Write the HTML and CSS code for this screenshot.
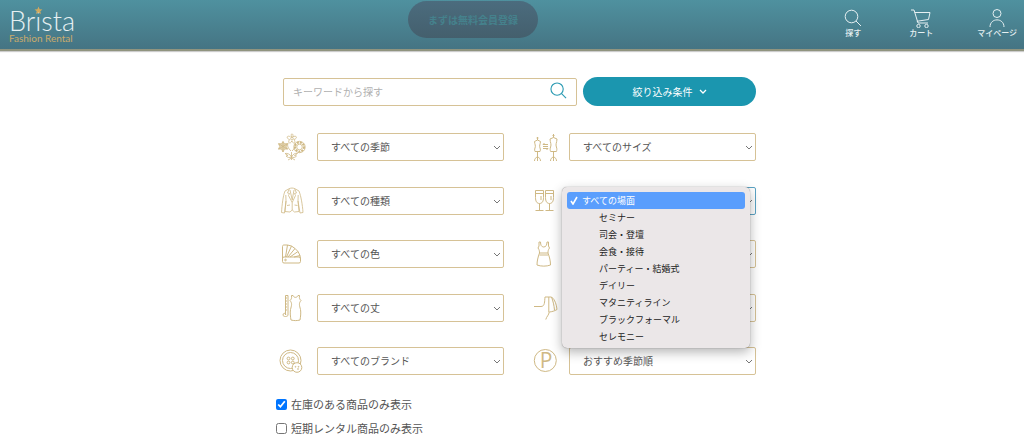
FILE: index.html
```
<!DOCTYPE html>
<html lang="ja">
<head>
<meta charset="utf-8">
<meta name="viewport" content="width=device-width, initial-scale=1">
<title>Brista Fashion Rental</title>
<link rel="stylesheet" href="styles.css">
</head>
<body>
<svg class="sprite" aria-hidden="true">
  <symbol id="chevron" viewBox="0 0 8 6"><path d="M1 1l3 3 3-3"/></symbol>
  <symbol id="search" viewBox="0 0 18 18"><circle cx="7.5" cy="7.5" r="6.5"/><path d="M12 12l5 5"/></symbol>
</svg>

<header class="header">
  <a class="logo" href="#">
    <span class="logo-name">Brista</span>
    <svg class="logo-star" viewBox="0 0 8 8" aria-hidden="true"><path d="M4 .5l1 2.3 2.500.2-1.900 1.600.6 2.600L4 5.800 1.800 7.200l.6-2.600L.5 3l2.500-.2z"/></svg>
    <span class="logo-sub">Fashion Rental</span>
  </a>
  <a class="cta" href="#">まずは無料会員登録</a>
  <nav class="nav">
    <a class="nav-item" href="#">
      <svg class="nav-icon" viewBox="0 0 20 20" aria-hidden="true"><circle cx="8.500" cy="8.500" r="6.300"/><path d="M13 13l5 5"/></svg>
      <span>探す</span>
    </a>
    <a class="nav-item" href="#">
      <svg class="nav-icon" viewBox="0 0 20 20" aria-hidden="true"><path d="M0 2h3l4 13h10M3.700 4.500H19L17.500 11.500 5.800 13.300"/><circle cx="7.500" cy="18" r="1.700"/><circle cx="15.500" cy="18" r="1.700"/></svg>
      <span>カート</span>
    </a>
    <a class="nav-item" href="#">
      <svg class="nav-icon" viewBox="0 0 20 20" aria-hidden="true"><circle cx="10" cy="5.500" r="4"/><path d="M3 19c0-9.500 14-9.500 14 0"/></svg>
      <span>マイページ</span>
    </a>
  </nav>
</header>

<main class="main">
  <form class="filter">
    <div class="search-row">
      <div class="search-box">
        <input class="search-input" type="text" placeholder="キーワードから探す" aria-label="キーワードから探す">
        <button class="search-button" type="button" aria-label="探す"><svg class="search-icon" aria-hidden="true"><use href="#search"/></svg></button>
      </div>
      <button class="toggle" type="button">絞り込み条件 <svg class="toggle-icon" aria-hidden="true"><use href="#chevron"/></svg></button>
    </div>

    <div class="fields">
      <label class="field">
        <svg class="icon icon-fine" viewBox="0 0 32 28" aria-hidden="true">
          <path d="M15.700 4C13.800-.2 18-.2 16.800 4c3.800-2.500 5.200 1.500 1.200 2.500 2.500 3.500-.8 5-2.200 1.500-1.400 3.500-4.700 2-2.200-1.500-4-1-2.600-5 1.100-2.500"/>
          <circle cx="16" cy="5.700" r="1.300"/>
          <g class="tint"><path d="M7 8.500l1.500 2.300 3-.1-1.300 2.700 1.300 2.700-3-.1L7 19l-1.500-3-3 .1 1.300-2.700-1.300-2.700 3 .1z"/><path d="M7 8.500v10.500M2.500 10.700l9 5.400M2.500 16.100l9-5.400"/></g>
          <circle cx="23.500" cy="14" r="2.800"/>
          <circle class="petals" cx="23.500" cy="14" r="4.500"/>
          <circle cx="23.500" cy="14" r="5.700"/>
          <path d="M12 10c-1 3 0 5 3 8M19 10c1 3 0 5-3 8M15.500 27v-8M15.500 24c-2 1-4 .5-5.500-1l2-.5-3-2c2.500-.5 5 .5 6.500 3.500 1.500-3 3.500-4 6-3.500l-3 2 2 .5c-1.500 1.500-3 2-5 1M12 27l3.500-2 3.500 2"/>
        </svg>
        <span class="select-wrap"><select class="select" aria-label="季節"><option>すべての季節</option></select><svg class="chevron" aria-hidden="true"><use href="#chevron"/></svg></span>
      </label>
      <label class="field">
        <svg class="icon" viewBox="0 0 32 28" aria-hidden="true">
          <path d="M9.500 4v3l-3 1.500c.2 3 1.500 4 .5 6.500-.6 1.500-.4 2.500 0 3.500h5c.4-1 .6-2 0-3.500-1-2.500.3-3.500.5-6.500L9.500 7M8.500 5h2M9.500 18.500V28M6.500 28c0-2 1-3.500 3-4 2 .5 3 2 3 4"/>
          <path d="M25.500 1v3.500L22 6c.2 4 1.700 5 .6 8-.7 1.800-.5 3 0 4.500h5.800c.5-1.500.7-2.700 0-4.500-1.100-3 .4-4 .6-8l-3.500-1.500M24.500 2.500h2M25.500 18.500V28M22.500 28c0-2 1-3.500 3-4 2 .5 3 2 3 4"/>
          <path d="M20 11.500h-5l1.500-1.500M15 13.500h5M15 15.500h5L18.500 17"/>
        </svg>
        <span class="select-wrap"><select class="select" aria-label="サイズ"><option>すべてのサイズ</option></select><svg class="chevron" aria-hidden="true"><use href="#chevron"/></svg></span>
      </label>

      <label class="field">
        <svg class="icon icon-fine" viewBox="0 0 32 28" aria-hidden="true">
          <path d="M13.500 1.500L9 4C7 9 6 18 5.500 25.500l3 .5L10 14M18.500 1.500L23 4c2 5 3.500 14 4 21.500l-3 .5L22 14M9.800 8L10 14l-1 10.500 5 .5 2.200-2 2.300 2 4.500-.5L22 14l.2-6M13.500 1.500c1.500-.6 3.500-.6 5 0M13.500 1.500L11.500 6l2 .5-1 2 3.700 7 3.300-7-1-2 2-.5-2-4.500M16.200 15.500V23M14 3l2.200 10L18 3M11 18.500l3-.5M18.500 18l3 .5"/>
        </svg>
        <span class="select-wrap"><select class="select" aria-label="種類"><option>すべての種類</option></select><svg class="chevron" aria-hidden="true"><use href="#chevron"/></svg></span>
      </label>
      <div class="field">
        <svg class="icon" viewBox="0 0 32 28" aria-hidden="true">
          <path d="M7.500 3.500h8v7c0 4-1.500 6-4 6s-4-2-4-6zM17.500 3.500h8v7c0 4-1.500 6-4 6s-4-2-4-6zM7.500 6.500h8M17.500 6.500h8M11.500 16.500V23M21.500 16.500V23M7.500 23.500h8M17.500 23.500h8M13 9v4M23 9v4"/>
        </svg>
        <span class="select-wrap">
          <select class="select select-open" aria-label="場面"><option>すべての場面</option></select><svg class="chevron" aria-hidden="true"><use href="#chevron"/></svg>
          <ul class="menu" role="listbox" aria-label="場面">
            <li class="option option-current" role="option" aria-selected="true"><svg class="check" viewBox="0 0 8 9" aria-hidden="true"><path d="M1 5l2 3 4-7"/></svg>すべての場面</li>
            <li class="option" role="option">セミナー</li>
            <li class="option" role="option">司会・登壇</li>
            <li class="option" role="option">会食・接待</li>
            <li class="option" role="option">パーティー・結婚式</li>
            <li class="option" role="option">デイリー</li>
            <li class="option" role="option">マタニティライン</li>
            <li class="option" role="option">ブラックフォーマル</li>
            <li class="option" role="option">セレモニー</li>
          </ul>
        </span>
      </div>

      <label class="field">
        <svg class="icon" viewBox="0 0 32 28" aria-hidden="true">
          <rect x="6.500" y="17" width="18" height="6" rx="1.500"/>
          <path d="M6.500 19V6.500c0-1 .5-1.500 1.500-1.500h3.500L9.500 17M11.500 5l4 1L10.500 17M15.500 6l3.500 2.500L12 17M19 8.500l3 3L14 17M22 11.500l2 4L18 17M24 15.500l.5 4"/><circle cx="9.500" cy="20" r=".8"/>
        </svg>
        <span class="select-wrap"><select class="select" aria-label="色"><option>すべての色</option></select><svg class="chevron" aria-hidden="true"><use href="#chevron"/></svg></span>
      </label>
      <label class="field">
        <svg class="icon" viewBox="0 0 32 28" aria-hidden="true">
          <path d="M11 2v4l-1 2c1.500 2 1.500 3.500 1.500 5h8.500c0-1.500 0-3 1.500-5l-1-2V2M12.500 2c0 3 1 5 3.200 5S19 5 19 2M11 2h1.500M19 2h1.500M11.500 13C10 17 9 21 9 25c4 1.500 9.500 1.500 13.500 0 0-4-1-8-2.500-12M11.500 15h8.500"/>
        </svg>
        <span class="select-wrap"><select class="select" aria-label="柄"><option>すべての柄</option></select><svg class="chevron" aria-hidden="true"><use href="#chevron"/></svg></span>
      </label>

      <label class="field">
        <svg class="icon" viewBox="0 0 32 28" aria-hidden="true">
          <path d="M9.500 1.500h2.500V21c0 2-5 2-5 0 0-2.500 3.500-2 2.500 0zM9.500 4h1.500M9.500 7h1.500M9.500 10h1.500M9.500 13h1.500M9.500 16h1.500"/>
          <path d="M15.500 1.500h1.500c1 2.500 4 2.500 5 0h1.500c-.5 3 .5 4 1.500 5-2.500 3-1.500 5-.5 9 .6 3 0 8-.5 10.500-3 .8-6 .8-9 0-.5-2.500-1.100-7.500-.5-10.500 1-4 2-6-.5-9 1-1 2-2 1.500-5z"/>
        </svg>
        <span class="select-wrap"><select class="select" aria-label="丈"><option>すべての丈</option></select><svg class="chevron" aria-hidden="true"><use href="#chevron"/></svg></span>
      </label>
      <label class="field">
        <svg class="icon" viewBox="0 0 32 28" aria-hidden="true">
          <path d="M6 12.500h7c4 0 3.500-5 4-9.500h6.500c3.500 2.500 5 7.500 5.500 12.500-2.500 1.500-5 2.300-7.800 2.500-.2 3-2.700 4.500-3.400 7.500M20.800 3v15M23.500 3c1.500 4 2.500 8 3 13"/>
        </svg>
        <span class="select-wrap"><select class="select" aria-label="袖丈"><option>すべての袖丈</option></select><svg class="chevron" aria-hidden="true"><use href="#chevron"/></svg></span>
      </label>

      <label class="field">
        <svg class="icon" viewBox="0 0 32 28" aria-hidden="true">
          <circle cx="14.500" cy="13.500" r="10.500"/><circle cx="14.500" cy="13.500" r="8"/>
          <circle cx="12.500" cy="11.500" r="1.400"/><circle cx="16.800" cy="11.500" r="1.400"/><circle cx="12.500" cy="15.500" r="1.400"/><circle cx="16.800" cy="15.500" r="1.400"/>
          <circle class="cover" cx="21" cy="20.500" r="4.800"/><circle cx="19.500" cy="19.800" r=".4"/><circle cx="22.500" cy="19.800" r=".4"/><circle cx="22" cy="22" r=".4"/>
        </svg>
        <span class="select-wrap"><select class="select" aria-label="ブランド"><option>すべてのブランド</option></select><svg class="chevron" aria-hidden="true"><use href="#chevron"/></svg></span>
      </label>
      <label class="field">
        <svg class="icon" viewBox="0 0 32 28" aria-hidden="true">
          <circle cx="17.300" cy="13.500" r="11"/><text class="icon-letter" x="18" y="21" text-anchor="middle">P</text>
        </svg>
        <span class="select-wrap"><select class="select" aria-label="並び順"><option>おすすめ季節順</option></select><svg class="chevron" aria-hidden="true"><use href="#chevron"/></svg></span>
      </label>
    </div>

    <div class="checks">
      <label class="check-row"><input class="checkbox" type="checkbox" checked>在庫のある商品のみ表示</label>
      <label class="check-row"><input class="checkbox" type="checkbox">短期レンタル商品のみ表示</label>
    </div>
  </form>
</main>
</body>
</html>
```
FILE: styles.css
```
* { box-sizing: border-box; }

body {
  margin: 0;
  background: #fff;
  color: #555;
  font-family: "Noto Sans CJK JP", sans-serif;
  font-size: 10px;
}

a { color: inherit; text-decoration: none; }
button, input, select { font: inherit; }
svg { fill: none; stroke: currentColor; }

.sprite { position: absolute; width: 0; height: 0; }

.header {
  display: grid;
  grid-template-columns: 20fr auto 24fr;
  align-items: start;
  min-height: 51px;
  padding: 0 7px 0 9px;
  color: #e6f0f2;
  background: linear-gradient(#4f919f, #457483);
  border-bottom: 2px solid #90947f;
  box-shadow: 0 1px 1px #ccc;
}

.logo {
  position: relative;
  display: flex;
  flex-direction: column;
  justify-self: start;
  padding-top: 8px;
}
.logo-name { font: 300 27px/25px Lato, sans-serif; }
.logo-sub {
  color: #c9aa6c;
  font: 10px/10px Lato, sans-serif;
  white-space: nowrap;
}
.logo-star {
  position: absolute;
  top: 6px;
  left: 25px;
  width: 9px;
  height: 9px;
  color: #cfa95f;
  fill: currentColor;
  stroke: none;
}

.cta {
  margin-top: 1px;
  border-radius: 19px;
  width: 130px;
  background: linear-gradient(#4b6c7e, #445f6d);
  color: #45818c;
  font-weight: 700;
  line-height: 37px;
  text-align: center;
  white-space: nowrap;
}

.nav {
  display: flex;
  justify-content: flex-end;
  gap: 44px;
  padding-top: 8px;
}
.nav-item {
  display: flex;
  flex-direction: column;
  align-items: center;
  min-width: 24px;
  font-size: 8px;
  font-weight: 500;
  line-height: 10px;
  white-space: nowrap;
}
.nav-icon { width: 20px; height: 20px; }

.main { padding: 26px 16px 0; }

.filter {
  max-width: 488px;
  margin: 0 auto;
  padding-left: 8px;
}

.search-row {
  display: flex;
  gap: 6px;
  padding-left: 7px;
  margin-bottom: 27px;
}
.search-box { position: relative; flex: 1; }
.search-input {
  width: 100%;
  height: 28px;
  margin-top: 1px;
  padding: 0 36px 2px 9px;
  border: 1px solid #d6c296;
  border-radius: 2px;
  color: #555;
}
.search-input::placeholder { color: #b0b0b0; }
.search-button {
  position: absolute;
  top: 5px;
  right: 10px;
  padding: 0;
  border: 0;
  background: none;
  color: #2c9bb3;
}
.search-icon { display: block; width: 17px; height: 17px; stroke-width: 1.2; }
.toggle {
  display: flex;
  align-items: center;
  justify-content: center;
  gap: 6px;
  width: 173px;
  height: 29px;
  border: 0;
  border-radius: 15px;
  background: #1b96af;
  color: #fff;
}
.toggle-icon { width: 8px; height: 6px; stroke-width: 1.3; }

.fields {
  display: grid;
  grid-template-columns: 1fr 1fr;
  grid-auto-rows: 54px 53px;
  column-gap: 24px;
}
.field {
  display: flex;
  align-items: flex-start;
  gap: 9px;
}
.icon {
  flex: none;
  width: 32px;
  height: 28px;
  overflow: visible;
  color: #cfb985;
}
.icon-fine { stroke-width: .8; }
.tint { fill: #e3d5b3; }
.petals { stroke-width: 2; stroke-dasharray: 2 1; }
.cover { fill: #fff; }
.icon-letter {
  fill: currentColor;
  stroke: none;
  font: 21px "Open Sans", sans-serif;
}

.select-wrap { position: relative; flex: 1; }
.select {
  display: block;
  width: 100%;
  height: 28px;
  padding: 0 20px 2px 13px;
  border: 1px solid #d6c296;
  border-radius: 2px;
  appearance: none;
  background: #fff;
  color: #555;
}
.select-open { border-color: #5ba3c4; }
.chevron {
  position: absolute;
  top: 12px;
  right: 3px;
  width: 8px;
  height: 6px;
  color: #777;
  pointer-events: none;
}

.menu {
  position: absolute;
  z-index: 1;
  top: 0;
  left: -7px;
  right: 6px;
  margin: 0;
  padding: 5px 5px 3px;
  border-radius: 5px;
  background: #ebe7e8;
  box-shadow: 0 0 1px rgba(0, 0, 0, .5), 0 4px 12px rgba(0, 0, 0, .3);
  color: #222;
  font-size: 9px;
  line-height: 17px;
  list-style: none;
}
.option { padding-left: 32px; }
.option-current {
  display: flex;
  align-items: center;
  gap: 4px;
  padding-left: 3px;
  border-radius: 3px;
  background: #5a9efd;
  color: #fff;
}
.check { width: 8px; height: 9px; stroke-width: 1.6; }

.checks {
  display: flex;
  flex-direction: column;
  gap: 8px;
  margin-top: -5px;
}
.check-row {
  display: flex;
  align-items: center;
  gap: 4px;
  font-size: 11px;
  line-height: 16px;
}
.checkbox { width: 11px; height: 11px; margin: 0; }
```
